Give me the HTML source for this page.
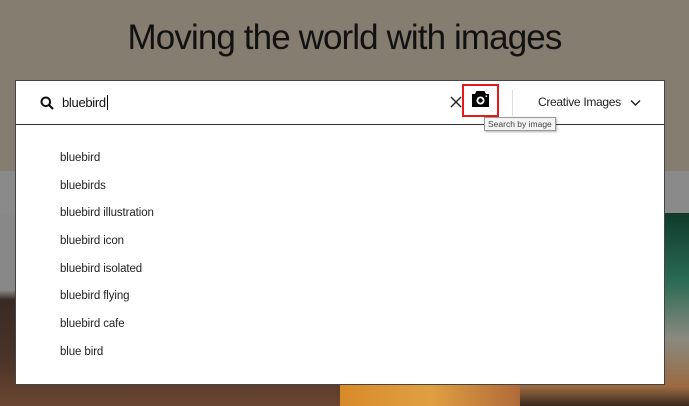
<!DOCTYPE html>
<html><head><meta charset="utf-8"><style>
*{margin:0;padding:0;box-sizing:border-box}
body{width:689px;height:406px;overflow:hidden;position:relative;font-family:"Liberation Sans",sans-serif;background:#857d70}
.band{position:absolute;left:0;top:171px;width:689px;height:42px;background:#8a8a8a}
.imgL{position:absolute;left:0;top:213px;width:340px;height:193px;background:linear-gradient(180deg,#888 0,#888 40%,#3a2a24 45%,#4a3328 75%,#6a4530 100%)}
.imgM{position:absolute;left:340px;top:380px;width:180px;height:26px;background:linear-gradient(90deg,#d88a2a,#e0a040,#b06a3a)}
.imgR{position:absolute;left:520px;top:213px;width:169px;height:193px;background:linear-gradient(180deg,#0f3a2a 0,#2a6a55 35%,#8a8a80 65%,#9a6a40 90%,#3a2820 100%)}
h1{position:absolute;top:18px;left:0;width:689px;text-align:center;font-weight:normal;font-size:35px;color:#111;letter-spacing:-0.9px}
.panel{position:absolute;left:15px;top:80px;width:650px;height:305px;background:#fff;border:1px solid #444}
.bar{height:44px;border-bottom:1px solid #333;position:relative}
.q{position:absolute;left:46px;top:14px;font-size:13px;color:#111;letter-spacing:-0.3px}
.sug{position:absolute;left:44px;font-size:11.5px;color:#222;letter-spacing:-0.1px}
.cam{position:absolute;left:446px;top:3px;width:37px;height:33px;border:2px solid #e31b1b}
.sep{position:absolute;left:496px;top:9px;width:1px;height:26px;background:#ddd}
.ci{position:absolute;left:522px;top:14px;font-size:12px;color:#222;letter-spacing:-0.3px}
.tip{position:absolute;left:484px;top:117px;font-size:8.5px;color:#444;background:#f4f4f4;border:1px solid #999;padding:1px 3px;box-shadow:1px 1px 2px rgba(0,0,0,.3)}
</style></head><body>
<div class="band"></div><div class="imgL"></div><div class="imgR"></div><div class="imgM"></div>
<h1>Moving the world with images</h1>
<div class="panel">
<div class="bar">
<svg style="position:absolute;left:24px;top:15px" width="14" height="14" viewBox="0 0 14 14"><circle cx="5.8" cy="5.8" r="4.3" fill="none" stroke="#111" stroke-width="2"/><path d="M9 9l4 4" stroke="#111" stroke-width="2.2"/></svg>
<div class="q">bluebird<span style="border-left:1px solid #000;margin-left:1px"></span></div>
<svg style="position:absolute;left:434px;top:15px" width="12" height="12" viewBox="0 0 12 12"><path d="M1 1l10 10M11 1L1 11" stroke="#222" stroke-width="1.4"/></svg>
<div class="cam"><svg style="position:absolute;left:7px;top:4px" width="19" height="18" viewBox="0 0 19 18"><path d="M5.5 1h8l1.5 3H18v13H1V4h3z" fill="#000"/><circle cx="9.5" cy="10.5" r="4" fill="#fff"/><circle cx="9.5" cy="10.5" r="2.2" fill="#000"/><rect x="14.5" y="5.5" width="1.6" height="1.4" fill="#fff"/></svg></div>
<div class="sep"></div>
<div class="ci">Creative Images</div>
<svg style="position:absolute;left:614px;top:18px" width="11" height="8" viewBox="0 0 11 8"><path d="M1 1.5l4.5 4.5 4.5-4.5" fill="none" stroke="#222" stroke-width="1.5"/></svg>
</div>
<div class="sug" style="top:71px">bluebird</div>
<div class="sug" style="top:99px">bluebirds</div>
<div class="sug" style="top:126px">bluebird illustration</div>
<div class="sug" style="top:154px">bluebird icon</div>
<div class="sug" style="top:182px">bluebird isolated</div>
<div class="sug" style="top:209px">bluebird flying</div>
<div class="sug" style="top:237px">bluebird cafe</div>
<div class="sug" style="top:265px">blue bird</div>
</div>
<div class="tip">Search by image</div>
</body></html>
